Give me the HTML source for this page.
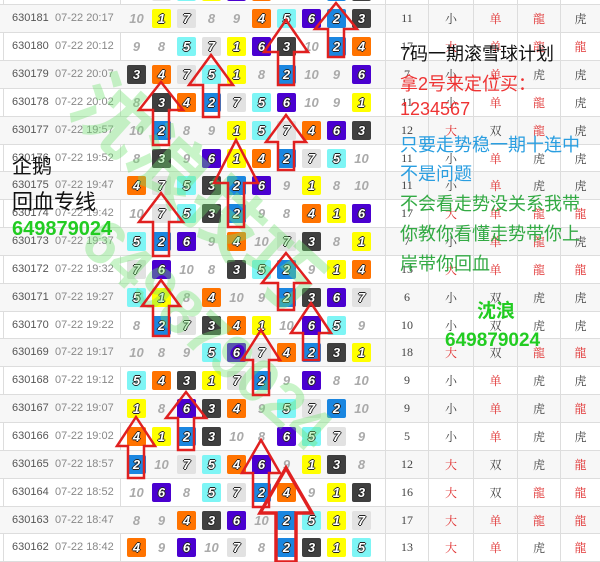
<!DOCTYPE html>
<html><head><meta charset="utf-8"><style>
*{margin:0;padding:0;box-sizing:border-box}
body{width:600px;height:562px;overflow:hidden;background:#fff;position:relative;font-family:"Liberation Sans","Noto Sans CJK SC",sans-serif}
#t{position:absolute;left:0;top:-22.5px;width:600px}
.r{position:relative;height:27.85px;border-bottom:1px solid #ddd}
.r:nth-child(even){background:#f7f7f7}
.id{position:absolute;left:12px;top:7px;font-size:11px;color:#555}
.dt{position:absolute;left:55px;top:7px;font-size:11px;color:#888}
.bs{position:absolute;left:124px;top:0;height:27px;display:flex}
.bs b{width:25px;height:27px;display:flex;align-items:center;justify-content:center;font-style:italic;font-weight:bold;font-size:13px;color:#aaa}
.bs b span{width:19px;height:19px;border-radius:2px;display:flex;align-items:center;justify-content:center;color:#fff;text-shadow:-1px 0 #222,1px 0 #222,0 -1px #222,0 1px #222}
.c1{background:#ffff00}.c2{background:#1a86e0}.c3{background:#3f3f3f}.c4{background:#ff7300}.c5{background:#7ef5f5}.c6{background:#4a00d0}.c7{background:#e2e2e2}
.rt{position:absolute;left:385px;top:0;height:27px;display:flex;font-family:"Liberation Serif","Noto Serif CJK SC",serif;font-size:12px;color:#444}
.rt i{font-style:normal;display:flex;align-items:center;justify-content:center;height:27px;border-left:1px solid #ddd}
.rt i:nth-child(1){width:43px}.rt i:nth-child(2){width:45px}.rt i:nth-child(3){width:44px}.rt i:nth-child(4){width:43px}.rt i:nth-child(5){width:40px}
.rd{color:#e03030}
.vl{position:absolute;top:0;height:562px;width:1px;background:#ddd}
.wm{position:absolute;color:rgba(110,225,110,0.38);font-weight:bold;white-space:nowrap;transform-origin:0 0}
.ov{position:absolute;white-space:nowrap;font-family:"Liberation Sans","Noto Sans CJK SC",sans-serif}
</style></head><body>
<div class="vl" style="left:3px"></div><div class="vl" style="left:120px"></div>
<div id="t">
<div class="r"><span class="id">630182</span><span class="dt">07-22 20:22</span><div class="bs"><b>8</b><b><span class="c7">7</span></b><b><span class="c5">5</span></b><b><span class="c1">1</span></b><b><span class="c6">6</span></b><b><span class="c4">4</span></b><b>9</b><b>10</b><b><span class="c2">2</span></b><b><span class="c3">3</span></b></div><div class="rt"><i>15</i><i class="rd">大</i><i class="rd">单</i><i class="rd">龍</i><i>虎</i></div></div>
<div class="r"><span class="id">630181</span><span class="dt">07-22 20:17</span><div class="bs"><b>10</b><b><span class="c1">1</span></b><b><span class="c7">7</span></b><b>8</b><b>9</b><b><span class="c4">4</span></b><b><span class="c5">5</span></b><b><span class="c6">6</span></b><b><span class="c2">2</span></b><b><span class="c3">3</span></b></div><div class="rt"><i>11</i><i>小</i><i class="rd">单</i><i class="rd">龍</i><i>虎</i></div></div>
<div class="r"><span class="id">630180</span><span class="dt">07-22 20:12</span><div class="bs"><b>9</b><b>8</b><b><span class="c5">5</span></b><b><span class="c7">7</span></b><b><span class="c1">1</span></b><b><span class="c6">6</span></b><b><span class="c3">3</span></b><b>10</b><b><span class="c2">2</span></b><b><span class="c4">4</span></b></div><div class="rt"><i>17</i><i class="rd">大</i><i class="rd">单</i><i class="rd">龍</i><i class="rd">龍</i></div></div>
<div class="r"><span class="id">630179</span><span class="dt">07-22 20:07</span><div class="bs"><b><span class="c3">3</span></b><b><span class="c4">4</span></b><b><span class="c7">7</span></b><b><span class="c5">5</span></b><b><span class="c1">1</span></b><b>8</b><b><span class="c2">2</span></b><b>10</b><b>9</b><b><span class="c6">6</span></b></div><div class="rt"><i>7</i><i>小</i><i class="rd">单</i><i>虎</i><i>虎</i></div></div>
<div class="r"><span class="id">630178</span><span class="dt">07-22 20:02</span><div class="bs"><b>8</b><b><span class="c3">3</span></b><b><span class="c4">4</span></b><b><span class="c2">2</span></b><b><span class="c7">7</span></b><b><span class="c5">5</span></b><b><span class="c6">6</span></b><b>10</b><b>9</b><b><span class="c1">1</span></b></div><div class="rt"><i>11</i><i>小</i><i class="rd">单</i><i class="rd">龍</i><i>虎</i></div></div>
<div class="r"><span class="id">630177</span><span class="dt">07-22 19:57</span><div class="bs"><b>10</b><b><span class="c2">2</span></b><b>8</b><b>9</b><b><span class="c1">1</span></b><b><span class="c5">5</span></b><b><span class="c7">7</span></b><b><span class="c4">4</span></b><b><span class="c6">6</span></b><b><span class="c3">3</span></b></div><div class="rt"><i>12</i><i class="rd">大</i><i>双</i><i class="rd">龍</i><i>虎</i></div></div>
<div class="r"><span class="id">630176</span><span class="dt">07-22 19:52</span><div class="bs"><b>8</b><b><span class="c3">3</span></b><b>9</b><b><span class="c6">6</span></b><b><span class="c1">1</span></b><b><span class="c4">4</span></b><b><span class="c2">2</span></b><b><span class="c7">7</span></b><b><span class="c5">5</span></b><b>10</b></div><div class="rt"><i>11</i><i>小</i><i class="rd">单</i><i>虎</i><i>虎</i></div></div>
<div class="r"><span class="id">630175</span><span class="dt">07-22 19:47</span><div class="bs"><b><span class="c4">4</span></b><b><span class="c7">7</span></b><b><span class="c5">5</span></b><b><span class="c3">3</span></b><b><span class="c2">2</span></b><b><span class="c6">6</span></b><b>9</b><b><span class="c1">1</span></b><b>8</b><b>10</b></div><div class="rt"><i>11</i><i>小</i><i class="rd">单</i><i>虎</i><i>虎</i></div></div>
<div class="r"><span class="id">630174</span><span class="dt">07-22 19:42</span><div class="bs"><b>10</b><b><span class="c7">7</span></b><b><span class="c5">5</span></b><b><span class="c3">3</span></b><b><span class="c2">2</span></b><b>9</b><b>8</b><b><span class="c4">4</span></b><b><span class="c1">1</span></b><b><span class="c6">6</span></b></div><div class="rt"><i>17</i><i class="rd">大</i><i class="rd">单</i><i class="rd">龍</i><i class="rd">龍</i></div></div>
<div class="r"><span class="id">630173</span><span class="dt">07-22 19:37</span><div class="bs"><b><span class="c5">5</span></b><b><span class="c2">2</span></b><b><span class="c6">6</span></b><b>9</b><b><span class="c4">4</span></b><b>10</b><b><span class="c7">7</span></b><b><span class="c3">3</span></b><b>8</b><b><span class="c1">1</span></b></div><div class="rt"><i>7</i><i>小</i><i class="rd">单</i><i class="rd">龍</i><i>虎</i></div></div>
<div class="r"><span class="id">630172</span><span class="dt">07-22 19:32</span><div class="bs"><b><span class="c7">7</span></b><b><span class="c6">6</span></b><b>10</b><b>8</b><b><span class="c3">3</span></b><b><span class="c5">5</span></b><b><span class="c2">2</span></b><b>9</b><b><span class="c1">1</span></b><b><span class="c4">4</span></b></div><div class="rt"><i>13</i><i class="rd">大</i><i class="rd">单</i><i class="rd">龍</i><i class="rd">龍</i></div></div>
<div class="r"><span class="id">630171</span><span class="dt">07-22 19:27</span><div class="bs"><b><span class="c5">5</span></b><b><span class="c1">1</span></b><b>8</b><b><span class="c4">4</span></b><b>10</b><b>9</b><b><span class="c2">2</span></b><b><span class="c3">3</span></b><b><span class="c6">6</span></b><b><span class="c7">7</span></b></div><div class="rt"><i>6</i><i>小</i><i>双</i><i>虎</i><i>虎</i></div></div>
<div class="r"><span class="id">630170</span><span class="dt">07-22 19:22</span><div class="bs"><b>8</b><b><span class="c2">2</span></b><b><span class="c7">7</span></b><b><span class="c3">3</span></b><b><span class="c4">4</span></b><b><span class="c1">1</span></b><b>10</b><b><span class="c6">6</span></b><b><span class="c5">5</span></b><b>9</b></div><div class="rt"><i>10</i><i>小</i><i>双</i><i>虎</i><i>虎</i></div></div>
<div class="r"><span class="id">630169</span><span class="dt">07-22 19:17</span><div class="bs"><b>10</b><b>8</b><b>9</b><b><span class="c5">5</span></b><b><span class="c6">6</span></b><b><span class="c7">7</span></b><b><span class="c4">4</span></b><b><span class="c2">2</span></b><b><span class="c3">3</span></b><b><span class="c1">1</span></b></div><div class="rt"><i>18</i><i class="rd">大</i><i>双</i><i class="rd">龍</i><i class="rd">龍</i></div></div>
<div class="r"><span class="id">630168</span><span class="dt">07-22 19:12</span><div class="bs"><b><span class="c5">5</span></b><b><span class="c4">4</span></b><b><span class="c3">3</span></b><b><span class="c1">1</span></b><b><span class="c7">7</span></b><b><span class="c2">2</span></b><b>9</b><b><span class="c6">6</span></b><b>8</b><b>10</b></div><div class="rt"><i>9</i><i>小</i><i class="rd">单</i><i>虎</i><i>虎</i></div></div>
<div class="r"><span class="id">630167</span><span class="dt">07-22 19:07</span><div class="bs"><b><span class="c1">1</span></b><b>8</b><b><span class="c6">6</span></b><b><span class="c3">3</span></b><b><span class="c4">4</span></b><b>9</b><b><span class="c5">5</span></b><b><span class="c7">7</span></b><b><span class="c2">2</span></b><b>10</b></div><div class="rt"><i>9</i><i>小</i><i class="rd">单</i><i>虎</i><i class="rd">龍</i></div></div>
<div class="r"><span class="id">630166</span><span class="dt">07-22 19:02</span><div class="bs"><b><span class="c4">4</span></b><b><span class="c1">1</span></b><b><span class="c2">2</span></b><b><span class="c3">3</span></b><b>10</b><b>8</b><b><span class="c6">6</span></b><b><span class="c5">5</span></b><b><span class="c7">7</span></b><b>9</b></div><div class="rt"><i>5</i><i>小</i><i class="rd">单</i><i>虎</i><i>虎</i></div></div>
<div class="r"><span class="id">630165</span><span class="dt">07-22 18:57</span><div class="bs"><b><span class="c2">2</span></b><b>10</b><b><span class="c7">7</span></b><b><span class="c5">5</span></b><b><span class="c4">4</span></b><b><span class="c6">6</span></b><b>9</b><b><span class="c1">1</span></b><b><span class="c3">3</span></b><b>8</b></div><div class="rt"><i>12</i><i class="rd">大</i><i>双</i><i>虎</i><i class="rd">龍</i></div></div>
<div class="r"><span class="id">630164</span><span class="dt">07-22 18:52</span><div class="bs"><b>10</b><b><span class="c6">6</span></b><b>8</b><b><span class="c5">5</span></b><b><span class="c7">7</span></b><b><span class="c2">2</span></b><b><span class="c4">4</span></b><b>9</b><b><span class="c1">1</span></b><b><span class="c3">3</span></b></div><div class="rt"><i>16</i><i class="rd">大</i><i>双</i><i class="rd">龍</i><i class="rd">龍</i></div></div>
<div class="r"><span class="id">630163</span><span class="dt">07-22 18:47</span><div class="bs"><b>8</b><b>9</b><b><span class="c4">4</span></b><b><span class="c3">3</span></b><b><span class="c6">6</span></b><b>10</b><b><span class="c2">2</span></b><b><span class="c5">5</span></b><b><span class="c1">1</span></b><b><span class="c7">7</span></b></div><div class="rt"><i>17</i><i class="rd">大</i><i class="rd">单</i><i class="rd">龍</i><i class="rd">龍</i></div></div>
<div class="r"><span class="id">630162</span><span class="dt">07-22 18:42</span><div class="bs"><b><span class="c4">4</span></b><b>9</b><b><span class="c6">6</span></b><b>10</b><b><span class="c7">7</span></b><b>8</b><b><span class="c2">2</span></b><b><span class="c3">3</span></b><b><span class="c1">1</span></b><b><span class="c5">5</span></b></div><div class="rt"><i>13</i><i class="rd">大</i><i class="rd">单</i><i>虎</i><i class="rd">龍</i></div></div>
</div>

<div class="wm" style="left:125px;top:45px;font-size:76px;transform:rotate(42deg)">沈浪技巧</div>
<div class="wm" style="left:115px;top:205px;font-size:62px;transform:rotate(42deg)">649879024</div>

<svg style="position:absolute;left:0;top:0" width="600" height="562" fill="none" stroke="#e02020" stroke-width="2.5">
<polygon points="336,3 357,29 344,29 344,57 328,57 328,29 315,29"/>
<polygon points="286,20 308,52 294,52 294,85 278,85 278,52 264,52"/>
<polygon points="211,55 233,85 219,85 219,117 203,117 203,85 189,85"/>
<polygon points="161,82 183,110 169,110 169,145 153,145 153,110 139,110"/>
<polygon points="286,115 306,142 294,142 294,170 278,170 278,142 266,142"/>
<polygon points="236,140 258,183 244,183 244,227 228,227 228,183 214,183"/>
<polygon points="161,193 183,222 169,222 169,256 153,256 153,222 139,222"/>
<polygon points="286,253 310,283 294,283 294,310 278,310 278,283 262,283"/>
<polygon points="161,280 180,306 169,306 169,336 153,336 153,306 142,306"/>
<polygon points="311,303 331,333 319,333 319,360 303,360 303,333 291,333"/>
<polygon points="261,330 280,360 269,360 269,395 253,395 253,360 242,360"/>
<polygon points="186,392 206,418 194,418 194,450 178,450 178,418 166,418"/>
<polygon points="136,417 155,446 144,446 144,478 128,478 128,446 117,446"/>
<polygon points="261,440 280,473 269,473 269,507 253,507 253,473 242,473"/>
<polygon stroke-width="3.5" points="286,468 312,513 296,513 296,562 276,562 276,513 260,513"/>
</svg>

<div class="ov" style="left:12px;top:150px;font-size:20px;color:#111">企鹅</div>
<div class="ov" style="left:12px;top:186px;font-size:21px;color:#111">回血专线</div>
<div class="ov" style="left:12px;top:218px;font-size:20px;font-weight:bold;color:#22cc22">649879024</div>

<div class="ov" style="left:400px;top:40px;font-size:18px;color:#111">7码一期滚雪球计划</div>
<div class="ov" style="left:400px;top:70px;font-size:18px;color:#ee3333">拿2号来定位买：</div>
<div class="ov" style="left:400px;top:99px;font-size:18px;color:#ee3333">1234567</div>
<div class="ov" style="left:400px;top:131px;font-size:18px;color:#2a9ee0">只要走势稳一期十连中</div>
<div class="ov" style="left:400px;top:160px;font-size:18px;color:#2a9ee0">不是问题</div>
<div class="ov" style="left:400px;top:190px;font-size:18px;color:#33aa44">不会看走势没关系我带</div>
<div class="ov" style="left:400px;top:220px;font-size:18px;color:#33aa44">你教你看懂走势带你上</div>
<div class="ov" style="left:400px;top:250px;font-size:18px;color:#33aa44">岸带你回血</div>
<div class="ov" style="left:477px;top:296px;font-size:19px;font-weight:bold;color:#22cc22">沈浪</div>
<div class="ov" style="left:445px;top:330px;font-size:19px;font-weight:bold;color:#22cc22">649879024</div>
</body></html>
